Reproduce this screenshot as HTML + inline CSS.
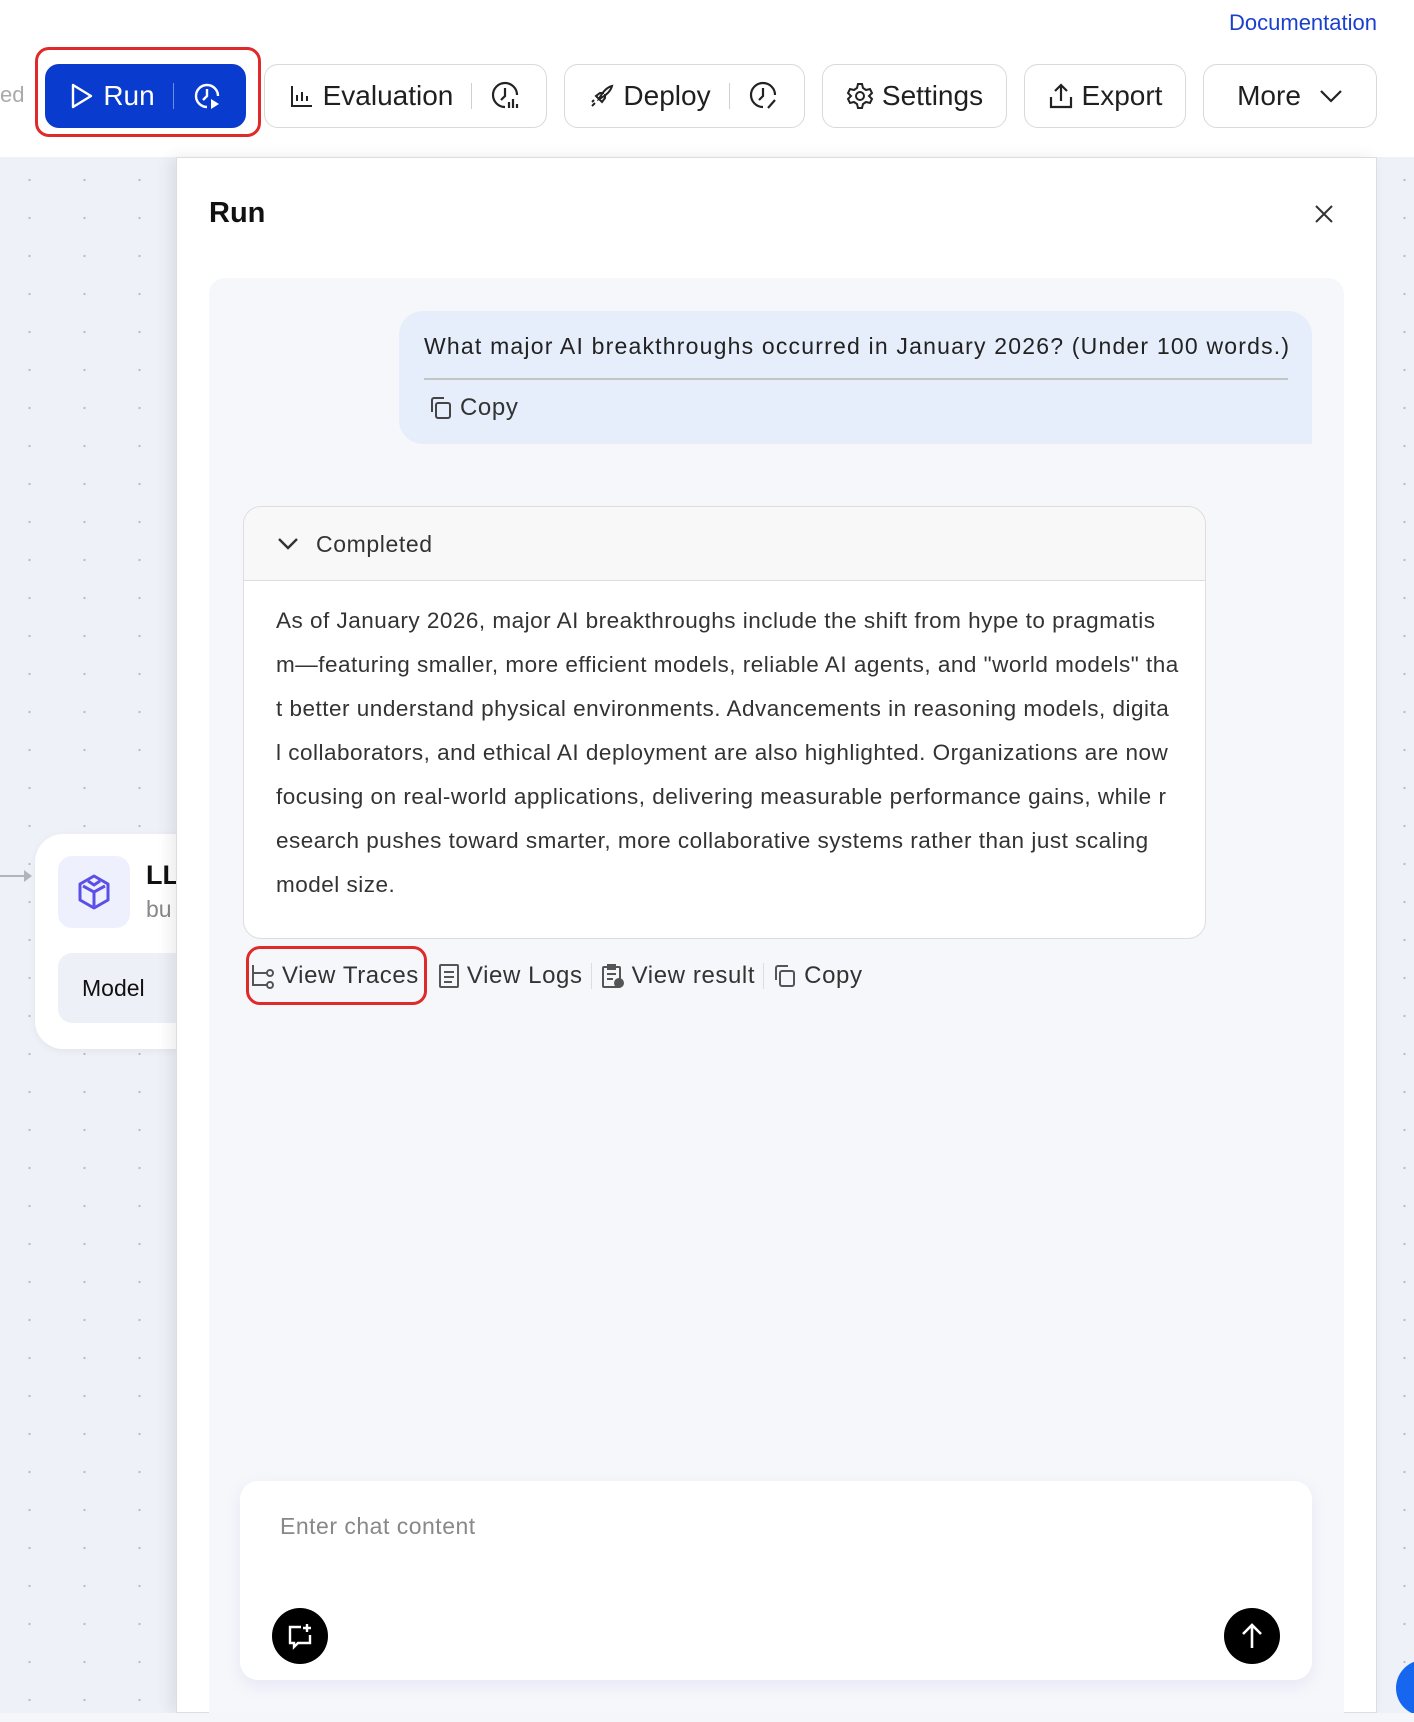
<!DOCTYPE html>
<html><head><meta charset="utf-8"><style>
*{box-sizing:border-box;margin:0;padding:0}
body{width:1414px;height:1722px;position:relative;overflow:hidden;font-family:"Liberation Sans",sans-serif;background:#fff;color:#1f1f1f}
.abs{position:absolute}
.canvas{left:0;top:157px;width:1414px;height:1565px;background-color:#eef1f8;background-image:radial-gradient(circle,#b5bac6 1px,transparent 1.3px);background-size:55px 38px;background-position:2px 4px}
.btn{position:absolute;top:64px;height:64px;border:1.5px solid #d9d9d9;border-radius:14px;background:#fff;display:flex;align-items:center;justify-content:center;font-size:28px;color:#1f1f1f;gap:8px}
.sep{width:1px;height:26px;background:#d0d0d0;margin:0 10px}
.line{white-space:nowrap;height:44px;line-height:44px}
.act{display:flex;align-items:center;gap:6px;font-size:24px;color:#333;letter-spacing:.6px}
</style></head><body>
<div class="abs canvas"></div>
<div class="abs" style="left:0;top:0;width:1414px;height:157px;background:#fff"></div>
<div class="abs" style="right:37px;top:10px;font-size:22px;color:#1a3fcf">Documentation</div>
<div class="abs" style="left:0;top:82px;font-size:22px;color:#aaa">ed</div>
<div class="abs" style="left:35px;top:47px;width:226px;height:90px;border:3px solid #e02a2a;border-radius:14px"></div>
<div class="btn" style="left:45px;width:201px;background:#0a3bcf;border-color:#0a3bcf;color:#fff">
<svg width="26" height="28" viewBox="0 0 26 28"><path d="M4 3 L22 14 L4 25 Z" fill="none" stroke="#fff" stroke-width="2.4" stroke-linejoin="round"/></svg>Run<span class="sep" style="background:#6f8be5"></span>
<svg width="30" height="30" viewBox="0 0 30 30" fill="none" stroke="#fff" stroke-width="2.4"><path d="M26 15A11 11 0 1 0 15 26"/><path d="M15 8v7l-4 4"/><path d="M19 18l8 5-8 5z" fill="#fff" stroke="none"/></svg></div>
<div class="btn" style="left:264px;width:283px"><svg width="26" height="26" viewBox="0 0 26 26" fill="none" stroke="#222" stroke-width="2"><path d="M3 3v20h20M8 18v-6M13 18v-9M18 18v-5"/></svg>Evaluation<span class="sep"></span><svg width="32" height="32" viewBox="0 0 32 32" fill="none" stroke="#222" stroke-width="2.2"><path d="M27 15A12 12 0 1 0 15 27"/><path d="M15 8v8l-4 4"/><path d="M19 28v-6M23 28v-9M27 28v-4"/></svg></div>
<div class="btn" style="left:564px;width:241px"><svg width="26" height="26" viewBox="0 0 26 26" fill="none" stroke="#222" stroke-width="2"><path d="M10 16c4-8 9-12 13-13-1 4-5 9-13 13zM10 16l-3-3 4-3h4M10 16l3 3 3-4v-4M6 20l-3 3M5 17l-2 2"/></svg>Deploy<span class="sep"></span><svg width="32" height="32" viewBox="0 0 32 32" fill="none" stroke="#222" stroke-width="2.2"><path d="M27 15A12 12 0 1 0 15 27"/><path d="M15 8v8l-4 4"/><path d="M20 28l7-8"/></svg></div>
<div class="btn" style="left:822px;width:185px"><svg width="28" height="28" viewBox="0 0 28 28" fill="none" stroke="#222" stroke-width="2"><circle cx="14" cy="14" r="4"/><path d="M12 2h4l1 4 3 2 4-1 2 4-3 3v0l3 3-2 4-4-1-3 2-1 4h-4l-1-4-3-2-4 1-2-4 3-3-3-3 2-4 4 1 3-2z"/></svg>Settings</div>
<div class="btn" style="left:1024px;width:162px"><svg width="26" height="28" viewBox="0 0 26 28" fill="none" stroke="#222" stroke-width="2.2"><path d="M13 19V3M7 9l6-6 6 6M3 15v10h20V15"/></svg>Export</div>
<div class="btn" style="left:1203px;width:174px;gap:18px">More<svg width="24" height="16" viewBox="0 0 24 16"><path d="M2 3l10 10 10-10" fill="none" stroke="#222" stroke-width="2.2"/></svg></div>

<!-- LLM node -->
<div class="abs" style="left:0;top:875px;width:28px;height:2px;background:#b0b4bc"></div>
<div class="abs" style="left:24px;top:870px;border-left:8px solid #b0b4bc;border-top:6px solid transparent;border-bottom:6px solid transparent"></div>
<div class="abs" style="left:35px;top:834px;width:200px;height:215px;background:#fff;border-radius:28px;box-shadow:0 2px 8px rgba(0,0,0,.05)"></div>
<div class="abs" style="left:58px;top:856px;width:72px;height:72px;background:#eef0fd;border-radius:14px;display:flex;align-items:center;justify-content:center"><svg width="40" height="40" viewBox="0 0 40 40" fill="none" stroke="#5b4fe8" stroke-width="3" stroke-linejoin="round"><path d="M20 4L34 12V28L20 36L6 28V12Z"/><path d="M20 20L20 34M20 20L9 14M20 20L31 14M14 9l6 4 6-4"/></svg></div>
<div class="abs" style="left:146px;top:860px;font-size:27px;font-weight:bold;color:#111">LL</div>
<div class="abs" style="left:146px;top:896px;font-size:23px;color:#888">bu</div>
<div class="abs" style="left:58px;top:953px;width:150px;height:70px;background:#eef0f8;border-radius:14px;font-size:23px;line-height:70px;padding-left:24px;color:#111">Model</div>

<!-- panel -->
<div class="abs" style="left:176px;top:157px;width:1201px;height:1556px;background:#fff;border:1px solid #ddd;box-shadow:-6px 0 14px rgba(0,0,0,.08)"></div>
<div class="abs" style="left:209px;top:197px;font-size:29px;font-weight:bold;color:#111">Run</div>
<svg class="abs" style="left:1313px;top:203px" width="22" height="22" viewBox="0 0 22 22"><path d="M3 3l16 16M19 3L3 19" stroke="#333" stroke-width="2"/></svg>
<div class="abs" style="left:209px;top:278px;width:1135px;height:1435px;background:#f6f7fa;border-radius:16px 16px 0 0"></div>

<div class="abs" style="left:399px;top:311px;width:913px;height:133px;background:#e6edfb;border-radius:24px 24px 0 24px"></div>
<div class="abs" style="left:424px;top:333px;font-size:23px;color:#222;white-space:nowrap;letter-spacing:1.2px">What major AI breakthroughs occurred in January 2026? (Under 100 words.)</div>
<div class="abs" style="left:424px;top:378px;width:864px;height:2px;background:#c4c4c4"></div>
<div class="abs act" style="left:428px;top:394px"><svg width="26" height="26" viewBox="0 0 26 26" fill="none" stroke="#444" stroke-width="2"><rect x="8" y="8" width="14" height="15" rx="2"/><path d="M4 17V5a2 2 0 0 1 2-2h10"/></svg>Copy</div>

<div class="abs" style="left:243px;top:506px;width:963px;height:433px;background:#fff;border:1.5px solid #ddd;border-radius:18px;overflow:hidden">
<div style="height:74px;background:#f8f8f8;border-bottom:1.5px solid #ddd"></div></div>
<svg class="abs" style="left:276px;top:535px" width="24" height="18" viewBox="0 0 24 18"><path d="M3 4l9 9 9-9" fill="none" stroke="#333" stroke-width="2.4"/></svg>
<div class="abs" style="left:316px;top:531px;font-size:23px;color:#333;letter-spacing:.6px">Completed</div>
<div class="abs" style="left:276px;top:599px;font-size:22.5px;color:#333;letter-spacing:.5px">
<div class="line">As of January 2026, major AI breakthroughs include the shift from hype to pragmatis</div>
<div class="line">m—featuring smaller, more efficient models, reliable AI agents, and "world models" tha</div>
<div class="line">t better understand physical environments. Advancements in reasoning models, digita</div>
<div class="line">l collaborators, and ethical AI deployment are also highlighted. Organizations are now</div>
<div class="line">focusing on real-world applications, delivering measurable performance gains, while r</div>
<div class="line">esearch pushes toward smarter, more collaborative systems rather than just scaling</div>
<div class="line">model size.</div></div>

<div class="abs" style="left:246px;top:946px;width:181px;height:59px;border:3px solid #e02a2a;border-radius:14px"></div>
<div class="abs" style="left:250px;top:962px;display:flex;align-items:center;gap:0">
<div class="act"><svg width="26" height="26" viewBox="0 0 26 26" fill="none" stroke="#555" stroke-width="2"><path d="M3 2v20h14M3 10h14"/><circle cx="20" cy="10" r="3"/><circle cx="20" cy="22" r="3"/></svg>View Traces</div>
<div class="act" style="margin-left:18px"><svg width="24" height="26" viewBox="0 0 24 26" fill="none" stroke="#555" stroke-width="2"><rect x="3" y="2" width="18" height="22" rx="1"/><path d="M7 9h10M7 14h10M7 19h8"/></svg>View Logs</div>
<span style="width:1px;height:26px;background:#ddd;margin:0 8px"></span>
<div class="act"><svg width="26" height="26" viewBox="0 0 26 26" fill="none" stroke="#555" stroke-width="2"><rect x="3" y="4" width="17" height="20" rx="1"/><path d="M8 2h7v4H8zM7 11h9M7 16h6"/><circle cx="19" cy="20" r="5" fill="#555" stroke="none"/></svg>View result</div>
<span style="width:1px;height:26px;background:#ddd;margin:0 8px"></span>
<div class="act"><svg width="26" height="26" viewBox="0 0 26 26" fill="none" stroke="#555" stroke-width="2"><rect x="8" y="8" width="14" height="15" rx="2"/><path d="M4 17V5a2 2 0 0 1 2-2h10"/></svg>Copy</div>
</div>

<div class="abs" style="left:240px;top:1481px;width:1072px;height:199px;background:#fff;border-radius:18px;box-shadow:0 6px 16px rgba(120,120,220,.12)"></div>
<div class="abs" style="left:280px;top:1513px;font-size:23px;color:#888;letter-spacing:.5px">Enter chat content</div>
<div class="abs" style="left:272px;top:1608px;width:56px;height:56px;border-radius:50%;background:#000;display:flex;align-items:center;justify-content:center"><svg width="30" height="30" viewBox="0 0 30 30" fill="none" stroke="#fff" stroke-width="2.4"><path d="M16 6H5v16h4v4l4-4h12V14M22 3v8M18 7h8"/></svg></div>
<div class="abs" style="left:1224px;top:1608px;width:56px;height:56px;border-radius:50%;background:#000;display:flex;align-items:center;justify-content:center"><svg width="28" height="30" viewBox="0 0 28 30" fill="none" stroke="#fff" stroke-width="2.6"><path d="M14 27V4M5 13l9-9 9 9"/></svg></div>
<div class="abs" style="left:1396px;top:1660px;width:56px;height:56px;border-radius:50%;background:#1766f0"></div>
<div class="abs" style="left:0;top:1713px;width:1414px;height:9px;background:#f5f6f9"></div>
</body></html>
